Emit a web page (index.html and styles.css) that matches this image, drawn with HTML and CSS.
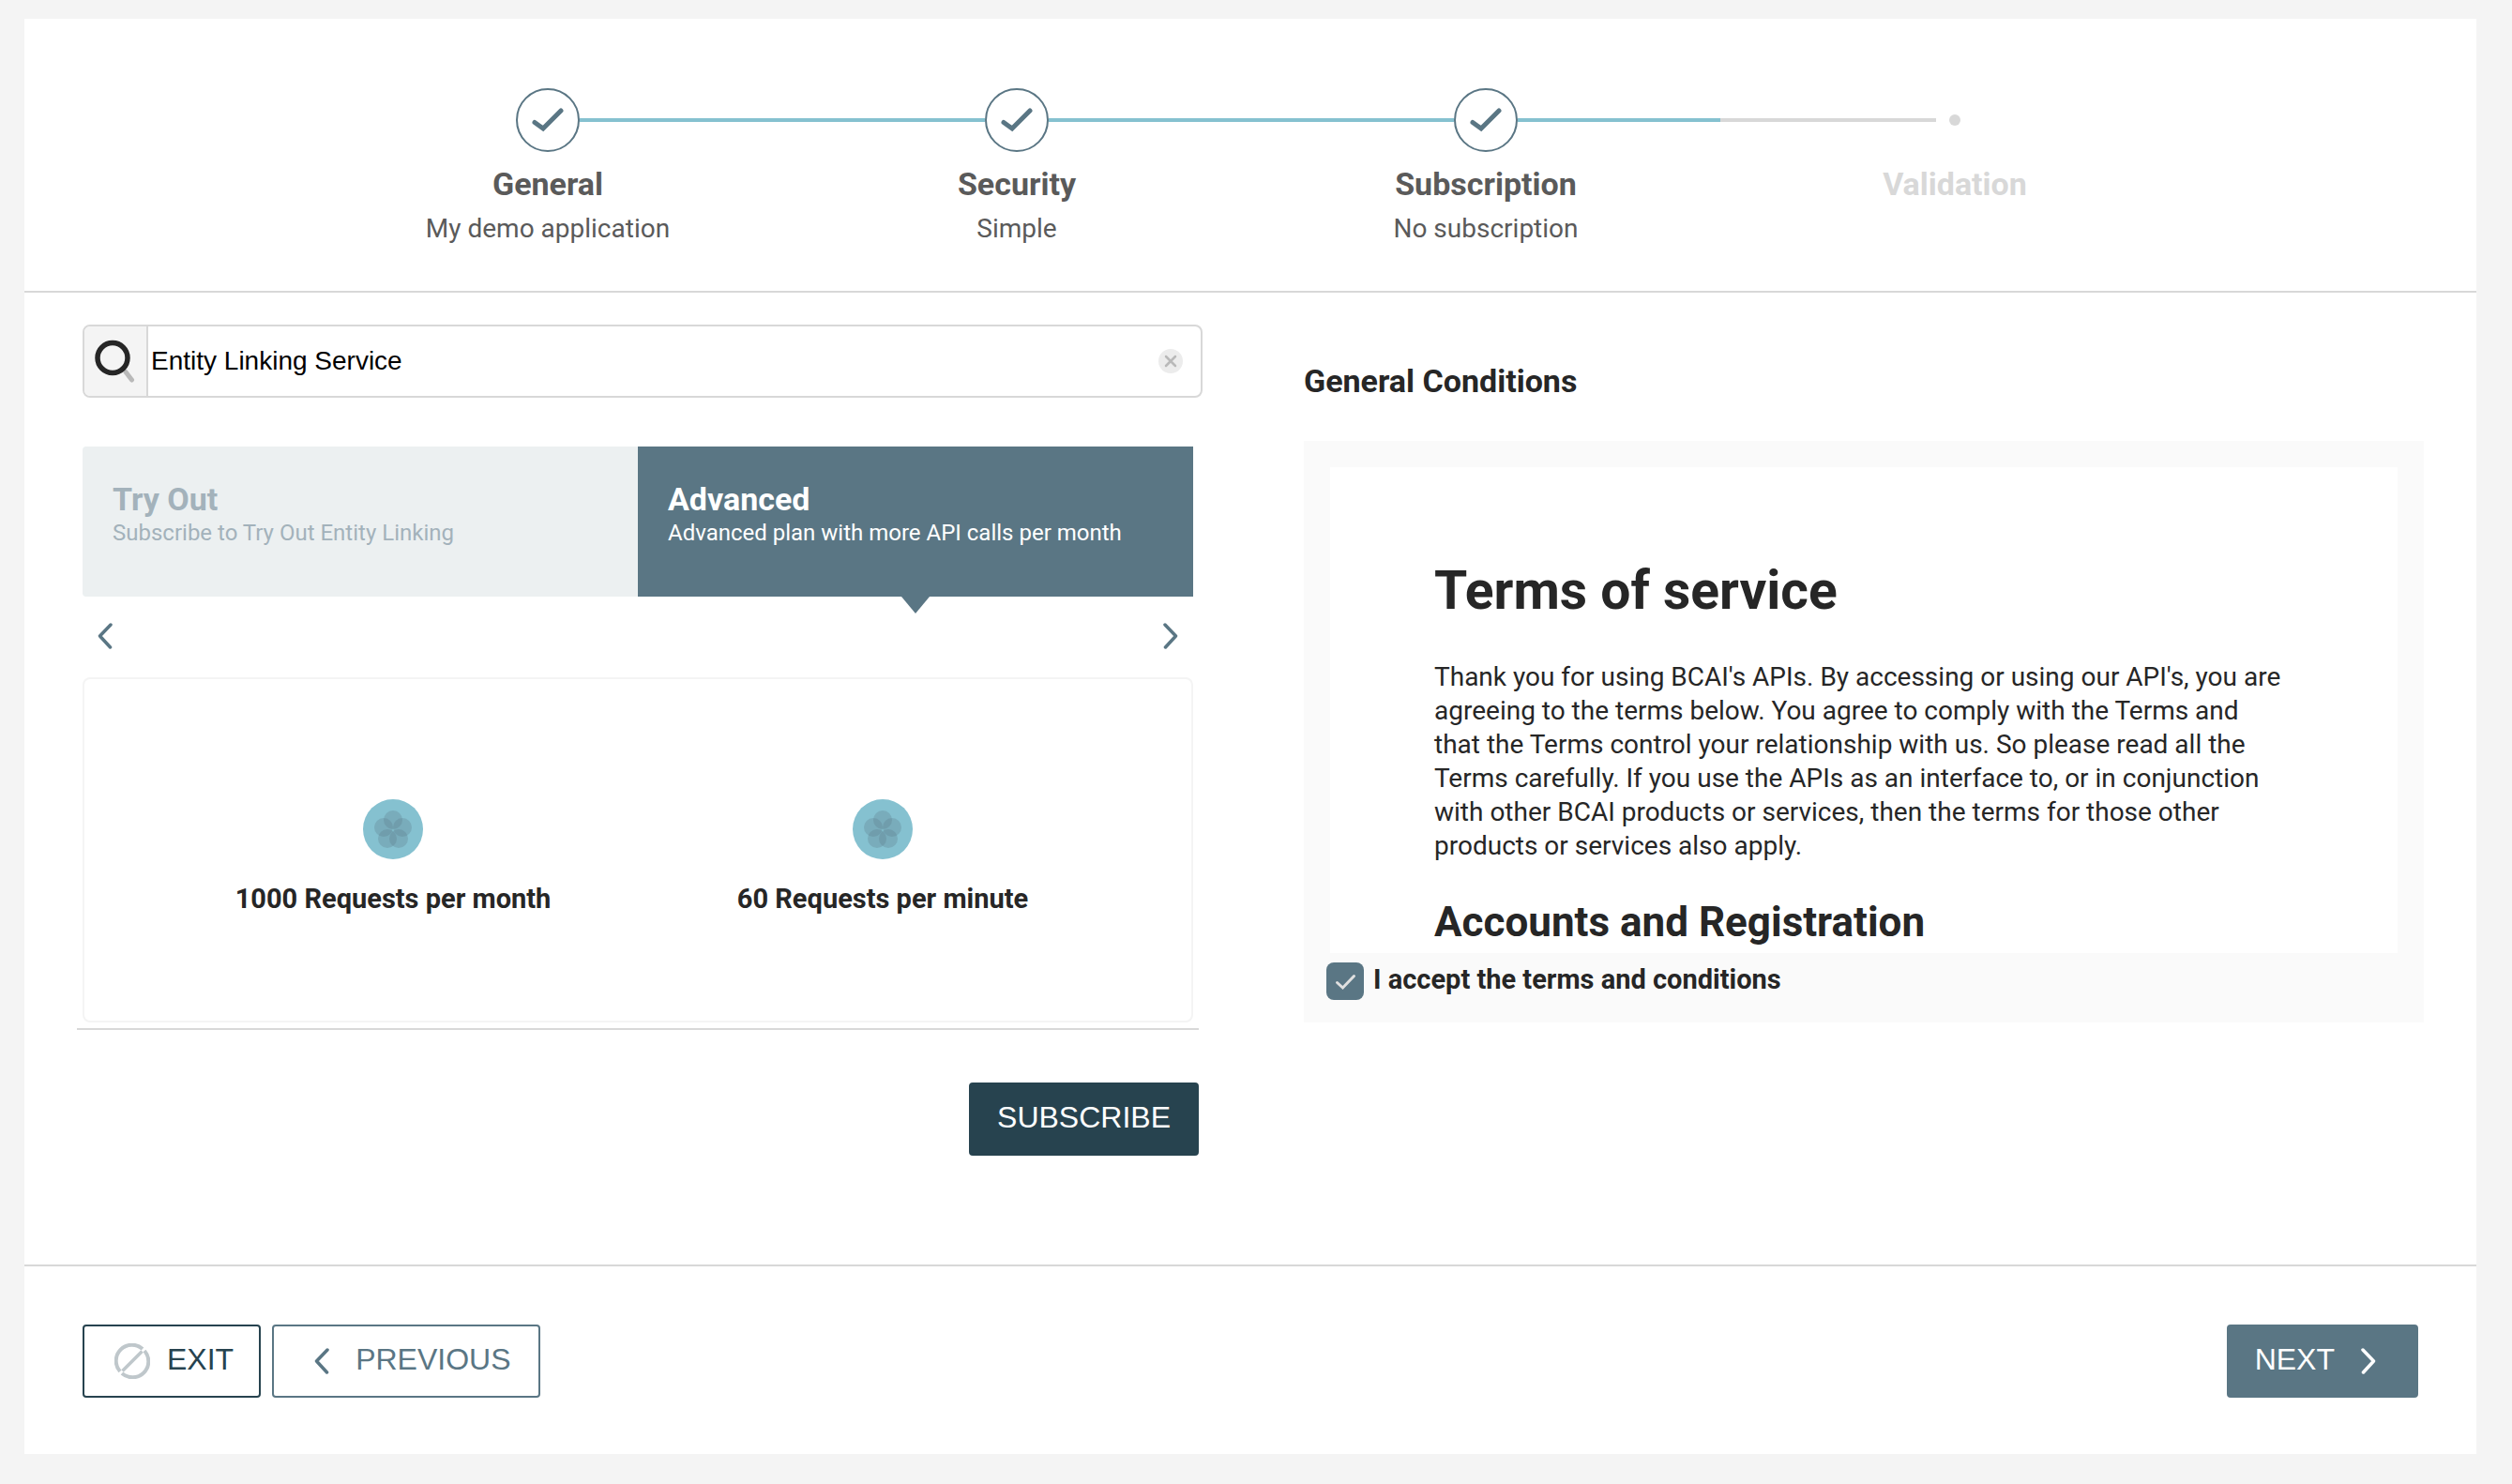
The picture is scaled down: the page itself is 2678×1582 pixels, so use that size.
FILE: index.html
```html
<!DOCTYPE html>
<html lang="en">
<head>
<meta charset="utf-8">
<meta name="viewport" content="width=device-width, initial-scale=1">
<title>Create application</title>
<link rel="stylesheet" href="styles.css">
</head>
<body>
<svg class="sprite" aria-hidden="true">
  <symbol id="check" viewBox="0 0 34 26"><path d="M3 15.500 12 22 31 3" fill="none" stroke="currentColor" stroke-width="5" stroke-linecap="round"/></symbol>
  <symbol id="chevron-left" viewBox="0 0 16 28"><path d="M14 2 2.500 14 13.500 26" fill="none" stroke="currentColor" stroke-width="3.500" stroke-linecap="round" stroke-linejoin="round"/></symbol>
  <symbol id="chevron-right" viewBox="0 0 16 28"><path d="M2 2 13.500 14 2.500 26" fill="none" stroke="currentColor" stroke-width="3.500" stroke-linecap="round" stroke-linejoin="round"/></symbol>
  <symbol id="flower" viewBox="0 0 64 64">
    <circle cx="32" cy="32" r="32" fill="#85c1d0"/>
    <g fill="#5a7684" fill-opacity=".28">
      <circle cx="32" cy="22" r="10"/><circle cx="42" cy="30" r="10"/><circle cx="38" cy="42" r="10"/><circle cx="26" cy="42" r="10"/><circle cx="22" cy="30" r="10"/>
    </g>
  </symbol>
</svg>
<div class="card">
  <header class="wizard-header">
    <ol class="stepper">
      <li class="step">
        <div class="track"><span class="line"></span><span class="marker"><svg class="check"><use href="#check"/></svg></span><span class="line done"></span></div>
        <strong class="step-title">General</strong>
        <span class="step-note">My demo application</span>
      </li>
      <li class="step">
        <div class="track"><span class="line done"></span><span class="marker"><svg class="check"><use href="#check"/></svg></span><span class="line done"></span></div>
        <strong class="step-title">Security</strong>
        <span class="step-note">Simple</span>
      </li>
      <li class="step">
        <div class="track"><span class="line done"></span><span class="marker"><svg class="check"><use href="#check"/></svg></span><span class="line done"></span></div>
        <strong class="step-title">Subscription</strong>
        <span class="step-note">No subscription</span>
      </li>
      <li class="step pending">
        <div class="track"><span class="line todo"></span><span class="dot"></span><span class="line"></span></div>
        <strong class="step-title">Validation</strong>
      </li>
    </ol>
  </header>

  <main class="columns">
    <section class="plans">
      <div class="search">
        <label class="search-icon" for="api-search" aria-label="Search">
          <svg width="44" height="46" viewBox="0 0 44 46" fill="none"><path d="M33 34.500 39.500 43" stroke="#b9b9b9" stroke-width="5" stroke-linecap="round"/><circle cx="19" cy="19.500" r="16" stroke="#262626" stroke-width="5.500"/></svg>
        </label>
        <input class="search-input" id="api-search" type="text" value="Entity Linking Service">
        <button class="clear" type="button" aria-label="Clear search">
          <svg width="26" height="26" viewBox="0 0 26 26"><circle cx="13" cy="13" r="13" fill="#ececec"/><path d="M8 8 18 18M18 8 8 18" stroke="#b9b9b9" stroke-width="2.500" stroke-linecap="round"/></svg>
        </button>
      </div>
      <div class="carousel">
        <div class="tabs" role="tablist">
          <button class="tab" type="button" role="tab" aria-selected="false"><span class="tab-title">Try Out</span><span class="tab-note">Subscribe to Try Out Entity Linking</span></button>
          <button class="tab active" type="button" role="tab" aria-selected="true"><span class="tab-title">Advanced</span><span class="tab-note">Advanced plan with more API calls per month</span></button>
        </div>
        <div class="arrows">
          <button class="arrow" type="button" aria-label="Previous plan"><svg class="chevron"><use href="#chevron-left"/></svg></button>
          <button class="arrow" type="button" aria-label="Next plan"><svg class="chevron"><use href="#chevron-right"/></svg></button>
        </div>
        <div class="limits">
          <div class="limit"><svg class="flower"><use href="#flower"/></svg><strong>1000 Requests per month</strong></div>
          <div class="limit"><svg class="flower"><use href="#flower"/></svg><strong>60 Requests per minute</strong></div>
        </div>
      </div>
      <div class="plan-actions">
        <button class="btn subscribe" type="button"><span class="btn-text">SUBSCRIBE</span></button>
      </div>
    </section>

    <section class="conditions">
      <h2 class="conditions-title">General Conditions</h2>
      <div class="panel">
        <article class="terms">
          <h3 class="terms-title">Terms of service</h3>
          <p class="terms-text">Thank you for using BCAI's APIs. By accessing or using our API's, you are agreeing to the terms below. You agree to comply with the Terms and that the Terms control your relationship with us. So please read all the Terms carefully. If you use the APIs as an interface to, or in conjunction with other BCAI products or services, then the terms for those other products or services also apply.</p>
          <h4 class="terms-subtitle">Accounts and Registration</h4>
        </article>
        <label class="accept" for="accept">
          <span class="box">
            <input class="box-input" id="accept" type="checkbox" checked>
            <svg class="box-check" width="40" height="40" viewBox="0 0 40 40"><path d="M11.500 21.500 17.500 27 29.500 14.500" fill="none" stroke="#e0e0e0" stroke-width="3" stroke-linecap="round"/></svg>
          </span>
          I accept the terms and conditions
        </label>
      </div>
    </section>
  </main>

  <footer class="wizard-footer">
    <button class="btn exit" type="button">
      <svg width="38" height="38" viewBox="0 0 38 38" fill="none" stroke="#bfc7cb"><path d="M30 6A17 17 0 0 0 6 30M8 32A17 17 0 0 0 32 8" stroke-width="4"/><path d="M8.500 29.500 29.500 8.500" stroke-width="3.500"/></svg>
      <span class="btn-text">EXIT</span>
    </button>
    <button class="btn previous" type="button"><svg class="chevron"><use href="#chevron-left"/></svg><span class="btn-text">PREVIOUS</span></button>
    <button class="btn next" type="button"><span class="btn-text">NEXT</span><svg class="chevron"><use href="#chevron-right"/></svg></button>
  </footer>
</div>
</body>
</html>
```
FILE: styles.css
```css
:root {
  --slate: #5a7684;
  --navy: #27434f;
  --teal: #85c1d0;
  --line: #d8d8d8;
  --ink: #262626;
  --ui: "Liberation Sans", Arial, sans-serif;
}

* { box-sizing: border-box; }

body {
  margin: 0;
  padding: 20px 38px 32px 26px;
  background: #f4f4f4;
  color: var(--ink);
  font: 28px/36px Roboto, "Noto Sans", sans-serif;
}

button { padding: 0; border: 0; background: none; font: inherit; color: inherit; cursor: pointer; }
h2, h3, h4, p { margin: 0; }
svg { display: block; flex: none; }
.sprite { display: none; }
.check { width: 34px; height: 26px; }
.chevron { width: 16px; height: 28px; }
.flower { width: 64px; height: 64px; }

.card { background: #fff; }

/* Stepper */
.wizard-header { padding: 74px 0 48px 2px; border-bottom: 2px solid var(--line); }
.stepper {
  display: grid;
  grid-template-columns: repeat(4, 1fr);
  max-width: 2000px;
  margin: 0 auto;
  padding: 0;
  list-style: none;
}
.step { display: flex; flex-direction: column; align-items: center; color: #5a5a5a; }
.track { display: flex; align-items: center; align-self: stretch; height: 68px; margin-bottom: 14px; }
.line { flex: 1; height: 4px; }
.done { background: var(--teal); }
.todo { background: var(--line); }
.marker {
  display: grid;
  place-items: center;
  width: 68px;
  height: 68px;
  border: 2px solid var(--slate);
  border-radius: 50%;
  color: var(--slate);
}
.dot { width: 12px; height: 12px; margin: 0 14px; border-radius: 50%; background: var(--line); }
.step-title { margin-bottom: 10px; font-size: 34px; line-height: 40px; }
.pending { color: var(--line); }

/* Two columns */
.columns {
  display: grid;
  grid-template-columns: 1196fr 1194fr;
  gap: 112px;
  padding: 0 56px 116px;
  border-bottom: 2px solid var(--line);
}
.plans { padding-top: 34px; }

.search {
  display: flex;
  align-items: center;
  height: 78px;
  margin: 0 -4px 52px 6px;
  border: 2px solid var(--line);
  border-radius: 8px;
  overflow: hidden;
}
.search-icon {
  display: grid;
  place-items: center;
  align-self: stretch;
  width: 68px;
  border-right: 2px solid var(--line);
  background: #f4f4f4;
}
.search-input {
  flex: 1;
  min-width: 0;
  align-self: stretch;
  padding: 0 3px;
  border: 0;
  outline: 0;
  font: 28px/32px var(--ui);
  color: #000;
}
.clear { margin-right: 19px; }

.carousel { padding: 0 6px 6px; border-bottom: 2px solid var(--line); }
.tabs { display: grid; grid-template-columns: 1fr 1fr; }
.tab {
  position: relative;
  display: flex;
  flex-direction: column;
  height: 160px;
  padding: 36px 32px;
  border-radius: 4px 0 0 4px;
  background: #ecf0f1;
  color: #a3b2bb;
  text-align: left;
}
.tab-title { font-size: 34px; font-weight: 700; line-height: 40px; }
.tab-note { font-size: 24px; line-height: 32px; }
.active { border-radius: 0; background: var(--slate); color: #fff; }
.active::after {
  content: "";
  position: absolute;
  top: 100%;
  left: 50%;
  margin-left: -15px;
  border: 15px solid transparent;
  border-top: 18px solid var(--slate);
  border-bottom: 0;
}
.arrows { display: flex; justify-content: space-between; padding: 28px 16px 30px; }
.arrow { color: var(--slate); }
.limits {
  display: grid;
  grid-template-columns: 1fr 1fr;
  padding: 128px 68px 112px;
  border: 2px solid #f4f4f4;
  border-radius: 8px;
}
.limit { display: flex; flex-direction: column; align-items: center; gap: 24px; font-size: 29px; }

.plan-actions { display: flex; justify-content: flex-end; padding-top: 56px; }

/* Conditions */
.conditions { padding-top: 74px; }
.conditions-title { margin-bottom: 44px; font-size: 34px; line-height: 40px; }
.panel { padding: 28px 28px 24px; background: #fafafa; }
.terms { padding: 96px 120px 7px 111px; background: #fff; }
.terms-title { margin-bottom: 38px; font-size: 57px; line-height: 72px; }
.terms-subtitle { margin-top: 37px; font-size: 44px; line-height: 52px; }
.accept { display: flex; gap: 10px; margin: 10px 0 0 -4px; font-size: 29px; font-weight: 700; }
.box { position: relative; width: 40px; height: 40px; }
.box-input { display: block; appearance: none; width: 40px; height: 40px; margin: 0; border-radius: 8px; background: var(--slate); }
.box-check { position: absolute; inset: 0; pointer-events: none; }

/* Buttons */
.wizard-footer { display: flex; gap: 12px; padding: 62px 62px 60px; }
.btn {
  display: flex;
  align-items: center;
  height: 78px;
  border: 2px solid;
  border-radius: 4px;
  font: 32px/36px var(--ui);
}
.btn-text { padding-bottom: 4px; }
.subscribe { padding: 0 28px; border-color: var(--navy); background: var(--navy); color: #fff; }
.exit { gap: 18px; padding: 0 27px 0 32px; color: var(--navy); }
.previous { gap: 28px; padding: 0 29px 0 43px; color: var(--slate); }
.next { gap: 28px; margin-left: auto; padding: 0 43px 0 28px; border-color: var(--slate); background: var(--slate); color: #fff; }
```
